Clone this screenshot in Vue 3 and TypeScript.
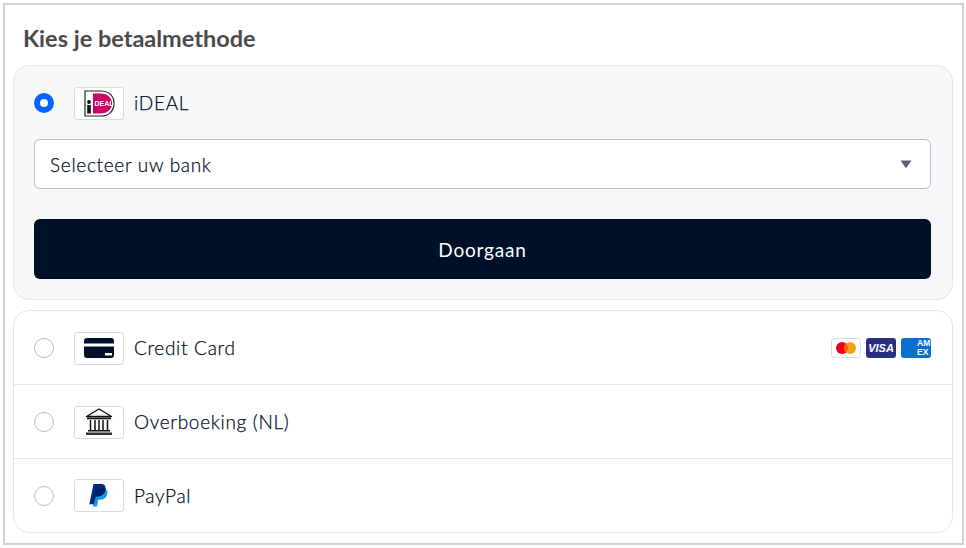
<script setup lang="ts">
const others = [
  { id: 'card', label: 'Credit Card' },
  { id: 'bank', label: 'Overboeking (NL)' },
  { id: 'paypal', label: 'PayPal' },
];
</script>

<template>
  <div class="frame">
    <h2 class="title">Kies je betaalmethode</h2>

    <section class="panel active">
      <div class="row-head">
        <span class="radio checked" />
        <span class="logo">
          <svg width="31" height="27" viewBox="0 0 31 27">
            <path d="M1 1h16c8 0 13 5 13 12.500S25 26 17 26H1z" fill="#fff" stroke="#222" stroke-width="1.200" />
            <path d="M9 3.500h8c6.500 0 11 4.500 11 10s-4.500 10-11 10H9z" fill="#cc0066" />
            <circle cx="5" cy="12" r="1.900" fill="#111" />
            <rect x="3.200" y="15" width="3.600" height="8.500" fill="#111" />
            <text x="10.500" y="16" class="ideal-mark">DEAL</text>
          </svg>
        </span>
        <span class="name">iDEAL</span>
      </div>

      <div class="select">
        <span>Selecteer uw bank</span>
        <svg class="caret" width="12" height="8" viewBox="0 0 12 8">
          <path d="M0.500 0.500h11L6.800 7.200a1 1 0 0 1-1.600 0z" fill="#5b6274" />
        </svg>
      </div>

      <button class="submit" type="button">Doorgaan</button>
    </section>

    <section class="panel list">
      <div v-for="m in others" :key="m.id" class="row">
        <span class="radio" />
        <span class="logo">
          <svg v-if="m.id === 'card'" width="30" height="20" viewBox="0 0 30 20">
            <path d="M3 0h24a3 3 0 0 1 3 3v2.500H0V3a3 3 0 0 1 3-3zM0 8.500h30V17a3 3 0 0 1-3 3H3a3 3 0 0 1-3-3z" fill="#001029" />
            <rect x="21" y="15" width="7" height="2.500" fill="#fff" />
          </svg>
          <svg v-else-if="m.id === 'bank'" width="28" height="28" viewBox="0 0 28 28">
            <path d="M14 1 26.500 8.500H1.500z" fill="#fff" stroke="#111" stroke-width="1.400" stroke-linejoin="round" />
            <rect x="2" y="9.500" width="24" height="1.800" fill="#111" />
            <path d="M5.500 12v10M10 12v10M14 12v10M18 12v10M22.500 12v10" stroke="#111" stroke-width="1.500" />
            <rect x="3" y="22" width="22" height="1.500" fill="#111" />
            <rect x="1" y="24.500" width="26" height="2.500" fill="#333" />
          </svg>
          <svg v-else width="21" height="24" viewBox="0 0 22 26">
            <path d="M7.500 5h7c3 0 5.500 1.500 5 5-.6 4.500-3.500 7-7.500 7H9.500l-1.200 7.500H3.800z" fill="#0a9be0" />
            <path d="M4.500 0h8c4 0 5.700 2.500 5 6-.9 5-4.500 7.500-9 7.500H6.500L5 22H0z" fill="#022a84" />
            <path d="M7.200 5h9.900c.5.300.5.700.4 1-.9 5-4.500 7.500-9 7.500H6.500l-.7 3.600H3.900z" fill="#001c64" />
          </svg>
        </span>
        <span class="name">{{ m.label }}</span>
        <div v-if="m.id === 'card'" class="cards">
          <span class="badge mc">
            <svg width="22" height="14" viewBox="0 0 22 14">
              <circle cx="7" cy="7" r="6" fill="#eb001b" />
              <circle cx="15" cy="7" r="6" fill="#f79e1b" />
              <path d="M11 2.500a6 6 0 0 1 0 9 6 6 0 0 1 0-9z" fill="#ff5f00" />
            </svg>
          </span>
          <span class="badge visa">VISA</span>
          <span class="badge amex"><span class="amex-text">AM<br />EX</span></span>
        </div>
      </div>
    </section>
  </div>
</template>

<style>
body {
  margin: 0;
  background: #fff;
}
</style>

<style scoped>
.frame {
  box-sizing: border-box;
  width: 961px;
  height: 542px;
  margin: 3px 0 0 3px;
  padding: 0 9px 0 8px;
  border: 2px solid #d2d2d2;
  font-family: Lato, "Open Sans", sans-serif;
  color: #001029;
}

.title {
  margin: 0;
  padding: 18px 0 0 10px;
  height: 60px;
  box-sizing: border-box;
  font-size: 23.500px;
  line-height: 30px;
  font-weight: 700;
  color: #4a4a4a;
}

.panel {
  border: 1px solid #e3e6ea;
  border-radius: 16px;
}

.active {
  box-sizing: border-box;
  height: 235px;
  padding: 20px 21px 0 20px;
  background: #f6f7f9;
}

.list {
  margin-top: 10px;
}

.row-head,
.row {
  display: flex;
  align-items: center;
}

.row-head {
  height: 34px;
}

.row {
  box-sizing: border-box;
  height: 74px;
  padding: 1px 21px 0 20px;
  border-bottom: 1px solid #e3e6ea;
}

.row:last-child {
  height: 73px;
  padding-top: 0;
  border-bottom: 0;
}

.radio {
  box-sizing: border-box;
  width: 20px;
  height: 20px;
  margin-right: 20px;
  border: 1px solid #b5bcc4;
  border-radius: 50%;
  background: #fff;
}

.radio.checked {
  border: 6px solid #0066ff;
}

.logo {
  display: flex;
  flex: none;
  align-items: center;
  justify-content: center;
  box-sizing: border-box;
  width: 50px;
  height: 33px;
  margin-right: 10px;
  border: 1px solid #d9dcdf;
  border-radius: 3px;
  background: #fff;
}

.ideal-mark {
  font-family: "Liberation Sans", sans-serif;
  font-size: 7px;
  font-weight: 700;
  fill: #fff;
}

.name {
  margin-top: -1px;
  font-size: 19px;
  font-weight: 300;
  letter-spacing: 0.7px;
  -webkit-text-stroke: 0.25px #001029;
}

.select {
  display: flex;
  align-items: center;
  justify-content: space-between;
  box-sizing: border-box;
  height: 50px;
  margin-top: 19px;
  padding: 0 18px 0 15px;
  border: 1px solid #b8c2cc;
  border-radius: 6px;
  background: #fff;
  font-size: 19px;
  font-weight: 300;
  letter-spacing: 0.7px;
  -webkit-text-stroke: 0.25px #001029;
}

.submit {
  display: block;
  width: 100%;
  height: 60px;
  margin-top: 30px;
  border: 0;
  border-radius: 6px;
  background: #001029;
  color: #fff;
  font: inherit;
  font-size: 19px;
  letter-spacing: 0.8px;
}

.cards {
  display: flex;
  gap: 5px;
  margin-left: auto;
}

.badge {
  display: flex;
  align-items: center;
  justify-content: center;
  box-sizing: border-box;
  width: 30px;
  height: 20px;
  border-radius: 3px;
}

.mc {
  border: 1px solid #d9dcdf;
  background: #fff;
}

.visa {
  background: #2a2f7f;
  color: #fff;
  font-family: "Liberation Sans", sans-serif;
  font-size: 11px;
  font-style: italic;
  font-weight: 700;
}

.amex {
  justify-content: flex-start;
  overflow: hidden;
  background: #0a6fd1;
  color: #fff;
  font-family: "Liberation Sans", sans-serif;
  font-size: 8.500px;
  font-weight: 700;
  line-height: 9px;
}

.amex-text {
  margin-left: 16px;
}
</style>
